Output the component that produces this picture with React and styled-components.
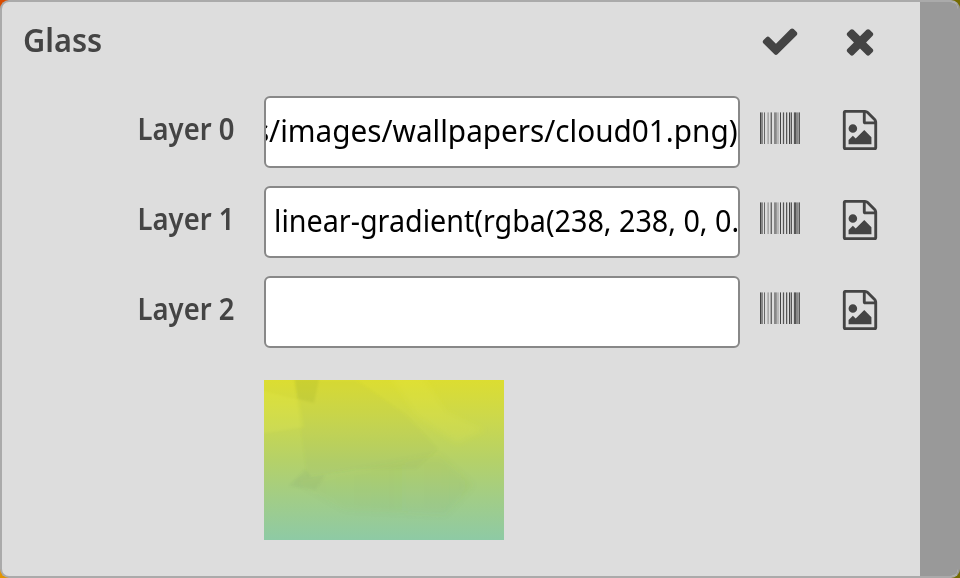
import React from "react";
import styled, { createGlobalStyle } from "styled-components";

const Global = createGlobalStyle`
  *{box-sizing:border-box}
  html,body,#root{margin:0;height:100%;overflow:hidden}
  body{font-family:"Noto Sans",sans-serif;color:#444}
`;
const Backdrop = styled.div`
  height: 578px;
  background: linear-gradient(90deg, transparent 50%, #756b00 50%), linear-gradient(#d94b00 50%, #e39400 50%);
`;
const Dialog = styled.main`
  display: flex;
  width: 960px;
  height: 578px;
  border: 2px solid #aaa;
  border-right-color: #999;
  border-radius: 9px;
  overflow: hidden;
  background: #ddd;
`;
const Content = styled.div`
  width: 918px;
  flex: none;
`;
const Scrollbar = styled.div`
  flex: 1;
  background: #999;
`;
const Header = styled.header`
  display: flex;
  height: 94px;
  padding: 18px 40px 0 21px;
`;
const Title = styled.h1`
  flex: 1;
  margin: 0;
  font-size: 33px;
  line-height: 39px;
  font-weight: 600;
`;
const Fit = styled.span`
  display: inline-block;
  flex: none;
  white-space: pre;
  transform-origin: ${(p) => p.$origin || "left"} center;
  transform: scaleX(${(p) => p.$scale});
`;
const IconButton = styled.button`
  width: 40px;
  height: 41px;
  padding: 0;
  border: 0;
  margin-left: 40px;
  background: none;
  color: #444;
  svg { display: block; }
`;
const Row = styled.div`
  display: flex;
  height: 72px;
  margin-bottom: 18px;
`;
const Label = styled.label`
  width: 232px;
  text-align: right;
  font-size: 31px;
  font-weight: 600;
  line-height: 64px;
`;
const Field = styled.div`
  display: flex;
  justify-content: ${(p) => (p.$end ? "flex-end" : "flex-start")};
  width: 476px;
  margin-left: 30px;
  padding: 0 ${(p) => (p.$end ? 0 : 8)}px;
  border: 2px solid #888;
  border-radius: 6px;
  overflow: hidden;
  background: #fff;
  color: #000;
  font-size: 30px;
  line-height: 65px;
`;
const Tools = styled.div`
  display: flex;
  align-items: flex-start;
  gap: 40px;
  padding: 14px 0 0 20px;
  ${IconButton} { height: 40px; margin: 0; }
`;
const Preview = styled.svg`
  display: block;
  margin: 32px 0 0 262px;
`;

const paths = {
  check: "M1671 566q0 40-28 68l-724 724-136 136q-28 28-68 28t-68-28l-136-136-362-362q-28-28-28-68t28-68l136-136q28-28 68-28t68 28l294 295 656-657q28-28 68-28t68 28l136 136q28 28 28 68z",
  times: "M1490 1322q0 40-28 68l-136 136q-28 28-68 28t-68-28l-294-294-294 294q-28 28-68 28t-68-28l-136-136q-28-28-28-68t28-68l294-294-294-294q-28-28-28-68t28-68l136-136q28-28 68-28t68 28l294 294 294-294q28-28 68-28t68 28l136 136q28 28 28 68t-28 68l-294 294 294 294q28 28 28 68z",
  image: "M1596 380q28 28 48 76t20 88v1152q0 40-28 68t-68 28h-1344q-40 0-68-28t-28-68v-1600q0-40 28-68t68-28h896q40 0 88 20t76 48zm-444-244v376h376q-10-29-22-41l-313-313q-12-12-41-22zm384 1528v-1024h-416q-40 0-68-28t-28-68v-416h-768v1536h1280zm-128-448v320h-1024v-192l192-192 128 128 384-384zm-832-192q-80 0-136-56t-56-136 56-136 136-56 136 56 56 136-56 136-136 56z",
};
const Icon = ({ name }) => (
  <svg width="40" height="40" viewBox="0 0 1792 1792" fill="currentColor"><path d={paths[name]} /></svg>
);

// Opacity, in ninths, of each one-pixel column of the barcode.
const bars = [9,5,5,0,7,0,0,2,3,0,3,7,0,0,5,5,4,2,2,0,9,0,1,8,1,0,8,2,0,9,3,8,0,1,8,8,5,5,4,8];
const Barcode = () => (
  <svg width="40" height="40" viewBox="0 0 40 40" fill="currentColor">
    {bars.map((v, i) => v > 0 && <rect key={i} x={i} y="2.4" width="1" height="31.6" opacity={v / 9} />)}
  </svg>
);

const layers = [
  { label: "Layer 0", value: "s/images/wallpapers/cloud01.png)", end: true, scale: 0.99 },
  { label: "Layer 1", value: "linear-gradient(rgba(238, 238, 0, 0.", scale: 0.957 },
  { label: "Layer 2", value: "", scale: 1 },
];

export default function App() {
  return (
    <Backdrop>
      <Global />
      <Dialog>
        <Content>
          <Header>
            <Title><Fit $scale={0.93}>Glass</Fit></Title>
            <IconButton aria-label="Apply"><Icon name="check" /></IconButton>
            <IconButton aria-label="Close"><Icon name="times" /></IconButton>
          </Header>
          {layers.map((l) => (
            <Row key={l.label}>
              <Label><Fit $origin="right" $scale={0.885}>{l.label}</Fit></Label>
              <Field $end={l.end}><Fit $origin={l.end ? "right" : "left"} $scale={l.scale}>{l.value}</Fit></Field>
              <Tools>
                <IconButton aria-label="Pattern"><Barcode /></IconButton>
                <IconButton aria-label="Image"><Icon name="image" /></IconButton>
              </Tools>
            </Row>
          ))}
          <Preview width="240" height="160" viewBox="0 0 240 160">
            <defs>
              <linearGradient id="sky" x1="0" y1="0" x2="0" y2="1">
                <stop offset="0" stopColor="#dcdd31" />
                <stop offset=".25" stopColor="#cbd84d" />
                <stop offset=".5" stopColor="#b5d168" />
                <stop offset=".75" stopColor="#a1cd88" />
                <stop offset="1" stopColor="#8ecaa5" />
              </linearGradient>
              <linearGradient id="fade" x1="0" y1="0" x2="1" y2="0">
                <stop offset="0" stopColor="#66843d" stopOpacity=".02" />
                <stop offset="1" stopColor="#66843d" stopOpacity=".06" />
              </linearGradient>
              <filter id="soft"><feGaussianBlur stdDeviation="1" /></filter>
              <filter id="haze"><feGaussianBlur stdDeviation="3" /></filter>
            </defs>
            <path fill="url(#sky)" d="M0 0h240v160H0z" />
            <g filter="url(#soft)">
              <path fill="#8e9d30" opacity=".14" d="M30-5h26l-6 28-16-4z" />
              <path fill="#66843d" opacity=".05" d="M30 0h62l50 35 32 34-22 20-60 0-49 7-6-45z" />
              <path fill="#ffff50" opacity=".1" d="M-4 10l39 10 5 27-44 7z" />
              <path fill="#567f55" opacity=".08" d="M25 106l16-17 6 8 14-2-9 15z" />
            </g>
            <g filter="url(#haze)">
              <path fill="#f1ee3e" opacity=".13" d="M125-5h33l24 37 38 18-27 13-40-28z" />
              <path fill="url(#fade)" d="M30 102l145-27 34 30-28 30-100-5z" />
            </g>
          </Preview>
        </Content>
        <Scrollbar />
      </Dialog>
    </Backdrop>
  );
}
